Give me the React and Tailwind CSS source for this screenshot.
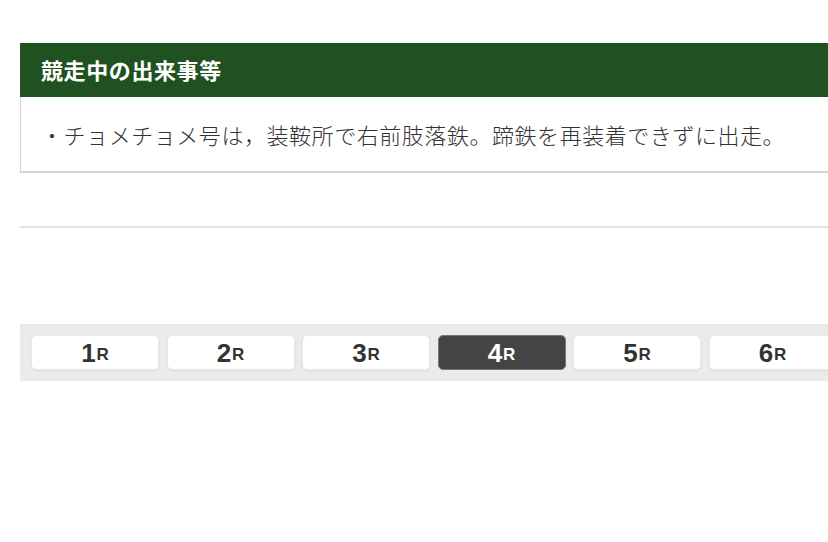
import React from "react";

const tabs = ["1", "2", "3", "4", "5", "6"];

export default function App() {
  return (
    <div
      className="w-[828px] h-[542px] overflow-hidden bg-white"
      style={{ fontFamily: '"Noto Sans CJK JP", "Noto Sans", sans-serif' }}
    >
      <div className="w-[860px] ml-[20px] pt-[43px]">
        <div className="h-[54px] bg-[#1f5220] flex items-center pl-[21px]">
          <span className="text-[22px] font-bold text-white leading-none tracking-[0.6px] -mt-[3px]">
            競走中の出来事等
          </span>
        </div>
        <div className="h-[76px] border-l border-b-2 border-[#d4d4d4] flex items-center pl-[20px]">
          <span className="text-[22px] font-light text-[#333] leading-none tracking-[0.55px]">
            ・チョメチョメ号は，装鞍所で右前肢落鉄。蹄鉄を再装着できずに出走。
          </span>
        </div>
        <div className="mt-[53px] h-[2px] bg-[#e2e2e2]" />
        <div className="mt-[96px] h-[57px] bg-[#ebebeb] flex items-center pl-[11px] gap-[7.5px]">
          {tabs.map((t) => {
            const active = t === "4";
            return (
              <div
                key={t}
                className={
                  active
                    ? "w-[128px] h-[35px] shrink-0 rounded-[5px] bg-[#444444] border border-[#777] flex items-center justify-center text-white"
                    : "w-[128px] h-[35px] shrink-0 rounded-[5px] bg-white border border-[#e8e8e8] shadow-[0_1px_3px_rgba(0,0,0,0.06)] flex items-center justify-center text-[#333]"
                }
                style={{ fontFamily: '"Liberation Sans", Arial, sans-serif' }}
              >
                <span className="font-bold text-[26px] leading-none">{t}</span>
                <span className="font-bold text-[17px] leading-none ml-[1px] mt-[4px]">R</span>
              </div>
            );
          })}
        </div>
      </div>
    </div>
  );
}
